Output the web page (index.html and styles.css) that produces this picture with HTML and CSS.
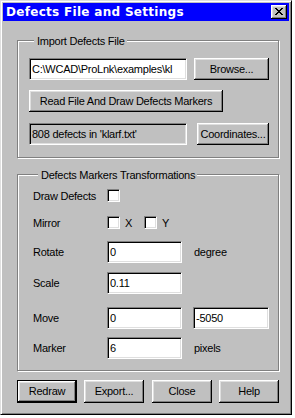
FILE: index.html
```html
<!DOCTYPE html>
<html>
<head>
<meta charset="utf-8">
<title>Defects File and Settings</title>
<link rel="stylesheet" href="styles.css">
</head>
<body>
<div class="window">
  <div class="titlebar">
    <span class="title">Defects File and Settings</span>
    <div class="close">
      <svg width="8" height="7" viewBox="0 0 8 7" shape-rendering="crispEdges"><path fill="#000" d="M0 0h2v1H0z M6 0h2v1H6z M1 1h2v1H1z M5 1h2v1H5z M2 2h4v1H2z M3 3h2v1H3z M2 4h4v1H2z M1 5h2v1H1z M5 5h2v1H5z M0 6h2v1H0z M6 6h2v1H6z"/></svg>
    </div>
  </div>
  <div class="content">
    <div class="group g1">
      <div class="legend">Import Defects File</div>
      <div class="row r1">
        <div class="field path">C:\WCAD\ProLnk\examples\kl</div>
        <div class="btn browse">Browse...</div>
      </div>
      <div class="row r2">
        <div class="btn readfile">Read File And Draw Defects Markers</div>
      </div>
      <div class="row r3">
        <div class="field status">808 defects in 'klarf.txt'</div>
        <div class="btn coords">Coordinates...</div>
      </div>
    </div>

    <div class="group g2">
      <div class="legend">Defects Markers Transformations</div>
      <div class="frow f-draw">
        <span class="lbl">Draw Defects</span>
        <span class="cb"></span>
      </div>
      <div class="frow f-mirror">
        <span class="lbl">Mirror</span>
        <span class="cb"></span><span class="cblbl">X</span>
        <span class="cb cb-y"></span><span class="cblbl">Y</span>
      </div>
      <div class="frow f-rotate">
        <span class="lbl">Rotate</span>
        <div class="field num">0</div>
        <span class="unit">degree</span>
      </div>
      <div class="frow f-scale">
        <span class="lbl">Scale</span>
        <div class="field num">0.11</div>
      </div>
      <div class="frow f-move">
        <span class="lbl">Move</span>
        <div class="field num">0</div>
        <div class="field num num2">-5050</div>
      </div>
      <div class="frow f-marker">
        <span class="lbl">Marker</span>
        <div class="field num">6</div>
        <span class="unit">pixels</span>
      </div>
    </div>

    <div class="buttons">
      <div class="btn default">Redraw</div>
      <div class="btn b-export">Export...</div>
      <div class="btn b-close">Close</div>
      <div class="btn b-help">Help</div>
    </div>
  </div>
</div>
</body>
</html>
```

FILE: styles.css
```css
* { box-sizing: border-box; }
html, body { margin: 0; padding: 0; background: #fff; }
body {
  font-family: "Liberation Sans", Arial, sans-serif;
  font-size: 11px;
  letter-spacing: -0.25px;
  color: #000;
}

.window {
  width: 292px;
  height: 415px;
  overflow: hidden;
  background: #c0c0c0;
  border: 1px solid;
  border-color: #dfdfdf #000 #000 #dfdfdf;
  box-shadow: inset 1px 1px #fff, inset -1px -1px #808080;
  padding: 2px;
}

.titlebar {
  height: 18px;
  background: #0000ff;
  display: flex;
  align-items: center;
  justify-content: space-between;
  padding: 0 2px 0 2px;
}
.title {
  font-family: "DejaVu Sans", Verdana, sans-serif;
  font-weight: bold;
  font-size: 12px;
  letter-spacing: 0.3px;
  color: #fff;
  line-height: 18px;
  padding-left: 1px;
}
.close {
  width: 16px;
  height: 14px;
  background: #c0c0c0;
  box-shadow: inset -1px -1px #000, inset 1px 1px #fff, inset -2px -2px #808080, inset 2px 2px #dfdfdf;
  display: flex;
  align-items: center;
  justify-content: center;
  padding: 0 1px 1px 0;
}
.close svg { display: block; }

.group {
  width: 262px;
  margin-left: 14px;
  border: 1px solid #808080;
  box-shadow: inset 1px 1px #fff, 1px 1px #fff;
}
.legend {
  width: max-content;
  margin: -6px 0 0 5px;
  padding: 0 2px 0 3px;
  background: #c0c0c0;
  line-height: 13px;
  white-space: nowrap;
}

.g1 { margin-top: 19px; padding: 0 0 12px 11px; }
.row { display: flex; align-items: center; }
.r1 { margin-top: 10px; }
.r2 { margin-top: 10px; }
.r3 { margin-top: 11px; }

.field {
  height: 22px;
  background: #fff;
  border: 1px solid;
  border-color: #808080 #fff #fff #808080;
  box-shadow: inset 1px 1px #000, inset -1px -1px #dfdfdf;
  padding: 0 0 0 2px;
  line-height: 20px;
  white-space: nowrap;
  overflow: hidden;
}
.path { width: 158px; }
.status { width: 158px; background: #c0c0c0; }

.btn {
  height: 22px;
  background: #c0c0c0;
  box-shadow: inset -1px -1px #000, inset 1px 1px #fff, inset -2px -2px #808080, inset 2px 2px #dfdfdf;
  display: flex;
  align-items: center;
  justify-content: center;
  white-space: nowrap;
  padding-bottom: 1px;
}
.browse { width: 75px; margin-left: 7px; }
.readfile { width: 194px; }
.coords { width: 72px; margin-left: 10px; }

.g2 { margin-top: 16px; padding: 0 0 11px 15px; }
.frow { display: flex; align-items: center; }
.lbl { width: 74px; }
.f-draw { margin-top: 7px; height: 13px; }
.f-mirror { margin-top: 14px; height: 13px; }
.f-rotate { margin-top: 12px; }
.f-scale { margin-top: 9px; }
.f-move { margin-top: 13px; }
.f-marker { margin-top: 8px; }

.cb {
  width: 13px;
  height: 13px;
  background: #fff;
  border: 1px solid;
  border-color: #808080 #fff #fff #808080;
  box-shadow: inset 1px 1px #000, inset -1px -1px #dfdfdf;
}
.cblbl { margin-left: 5px; }
.cb-y { margin-left: 12px; }

.num { width: 75px; }
.num2 { width: 76px; margin-left: 11px; }
.unit { margin-left: 12px; }

.buttons {
  display: flex;
  margin: 9px 0 0 14px;
}
.buttons .btn { width: 60px; height: 23px; }
.btn.default {
  border: 1px solid #000;
}
.b-export { margin-left: 7px; }
.b-close { margin-left: 8px; }
.b-help { margin-left: 7px; }
```
